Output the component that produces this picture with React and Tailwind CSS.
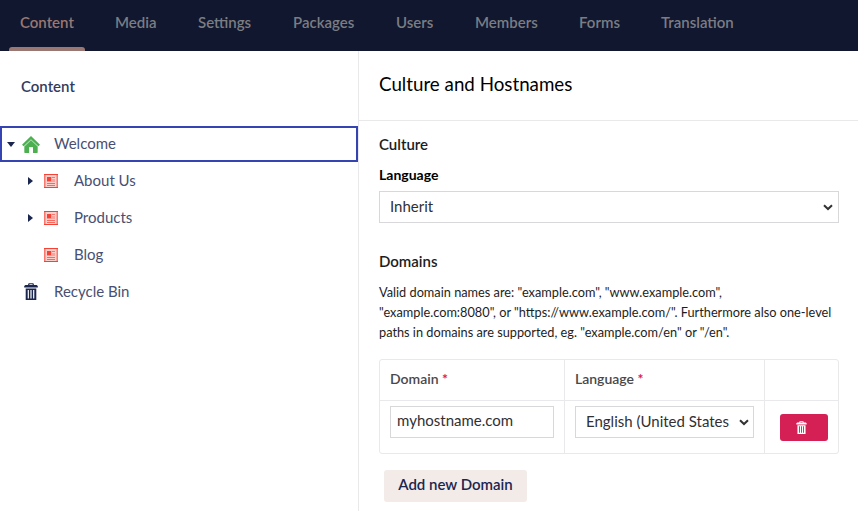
const NAV = [
  { label: 'Content', width: 'w-[95px]', active: true },
  { label: 'Media', width: 'w-[83px]' },
  { label: 'Settings', width: 'w-[95px]' },
  { label: 'Packages', width: 'w-[103px]' },
  { label: 'Users', width: 'w-[79px]' },
  { label: 'Members', width: 'w-[104px]' },
  { label: 'Forms', width: 'w-[82px]' },
  { label: 'Translation', width: 'w-[95px]' },
];

function TrashIcon({ className }) {
  return (
    <svg viewBox="0 0 14 17" className={className} fill="currentColor">
      <path d="M4 2 L4.6 0.3 H9.4 L10 2 H12.6 L13.8 3 V4.6 H0.2 V3 L1.4 2 Z M5.4 1.3 V2 H8.6 V1.3 Z" fillRule="evenodd" />
      <path fillRule="evenodd" d="M1.7 5.6 H12.3 V17 H1.7 Z M3.7 7 V15.4 H4.9 V7 Z M6.4 7 V15.4 H7.6 V7 Z M9.1 7 V15.4 H10.3 V7 Z" />
    </svg>
  );
}

function HomeIcon() {
  return (
    <svg viewBox="0 0 18 17" className="h-[17px] w-[18px] shrink-0 text-[#4caf50]" fill="currentColor">
      <path d="M9 2.5 L16 10 V16.6 H2 V10 Z" opacity="0.45" />
      <path d="M9 0 L18 8.8 L16.4 10.3 L9 3.2 L1.6 10.3 L0 8.8 Z" />
      <path d="M9 4.4 L15.4 10.5 V17 H11 V11.2 H7.2 V17 H2.6 V10.5 Z" />
      <path d="M7.2 11.2 H11 V17 H7.2 Z" fill="#fff" />
    </svg>
  );
}

function NewsIcon() {
  return (
    <svg viewBox="0 0 14 14" className="h-[14px] w-[14px] shrink-0" shapeRendering="crispEdges">
      <rect width="14" height="14" fill="#f44336" />
      <rect x="1" y="1" width="12" height="12" fill="#fccfcb" />
      <rect x="0" y="1" width="1" height="12" fill="#f8786f" />
      <rect x="1" y="1" width="1" height="12" fill="#faa39d" />
      <rect x="12" y="1" width="1" height="12" fill="#faa39d" />
      <rect x="13" y="1" width="1" height="12" fill="#f8786f" />
      <rect x="3" y="3" width="4" height="4" fill="#f44336" />
      <rect x="7" y="3" width="1" height="5" fill="#faa39d" />
      <rect x="3" y="7" width="4" height="1" fill="#f99088" />
      <rect x="8" y="3" width="3" height="1" fill="#f8786f" />
      <rect x="8" y="5" width="3" height="3" fill="#faa39d" />
      <rect x="3" y="9" width="8" height="1" fill="#f66a60" />
      <rect x="3" y="11" width="8" height="1" fill="#f66a60" />
    </svg>
  );
}

function Chevron() {
  return (
    <svg viewBox="0 0 10 7" className="h-[7px] w-[10px] shrink-0" fill="none" stroke="#333" strokeWidth="2">
      <path d="M1 1.2 L5 5 L9 1.2" />
    </svg>
  );
}

function CaretRight() {
  return (
    <svg viewBox="0 0 5 8" className="h-2 w-[5px] shrink-0" fill="#1b264f">
      <path d="M0 0 L5 4 L0 8 Z" />
    </svg>
  );
}

function TreeItem({ label, caret }) {
  return (
    <li className="flex h-[37px] items-center pl-7">
      <span className="flex w-4">{caret && <CaretRight />}</span>
      <NewsIcon />
      <span className="ml-4 pb-0.5">{label}</span>
    </li>
  );
}

function Header({ children }) {
  return (
    <span>
      {children} <span className="font-bold text-[#d42054]">*</span>
    </span>
  );
}

export default function App() {
  return (
    <div className="flex h-[511px] w-[858px] flex-col overflow-hidden bg-white font-['Lato',sans-serif] text-[15px] leading-5 text-black">
      <nav className="flex h-[51px] shrink-0 bg-[#11172e] pl-5 font-semibold text-[#7b7d84]">
        {NAV.map((item) => (
          <div key={item.label} className={`${item.width} flex shrink-0 flex-col justify-between pt-3`}>
            <span className={item.active ? 'text-[#997873]' : ''}>{item.label}</span>
            {item.active && <span className="-ml-[11px] h-1 w-[76px] rounded-t-[3px] bg-[#997873]" />}
          </div>
        ))}
      </nav>
      <div className="flex min-h-0 flex-1">
        <aside className="w-[359px] shrink-0 border-r border-[#e9e9eb] text-[#484f72]">
          <h2 className="h-[75px] pt-[25px] pl-[21px] font-semibold text-[#313b60]">Content</h2>
          <ul>
            <li className="flex h-9 items-center border-2 border-[#3544b1] pl-[5px]">
              <svg viewBox="0 0 8 5" className="h-[5px] w-2 shrink-0" fill="#1b264f">
                <path d="M0 0 H8 L4 5 Z" />
              </svg>
              <span className="ml-[7px] flex"><HomeIcon /></span>
              <span className="ml-3.5 pb-0.5">Welcome</span>
            </li>
            <TreeItem label="About Us" caret />
            <TreeItem label="Products" caret />
            <TreeItem label="Blog" />
            <li className="flex h-[37px] items-center pl-6">
              <TrashIcon className="h-[17px] w-[14px] shrink-0 text-[#1b264f]" />
              <span className="ml-4 pb-0.5">Recycle Bin</span>
            </li>
          </ul>
        </aside>
        <main className="flex-1">
          <h1 className="h-[70px] border-b border-[#e9e9eb] pt-[21px] pl-5 text-[18.75px] leading-6">Culture and Hostnames</h1>
          <div className="flex flex-col items-start pt-[13px] pl-5">
            <h2 className="font-semibold text-[#1d1d1d]">Culture</h2>
            <label className="mt-3 text-[14px] leading-[18px] font-bold">Language</label>
            <div className="mt-[7px] flex h-8 w-[460px] items-center justify-between border border-[#d8d7d9] pr-[5px] pl-2.5 text-[#303033]">
              <span className="pb-0.5">Inherit</span>
              <Chevron />
            </div>
            <h2 className="mt-7 font-semibold text-[#1d1d1d]">Domains</h2>
            <p className="mt-[11px] text-[12.75px] whitespace-nowrap text-[#1d1d1d]">
              Valid domain names are: "example.com", "www.example.com",<br />
              "example.com:8080", or "https://www.example.com/". Furthermore also one-level<br />
              paths in domains are supported, eg. "example.com/en" or "/en".
            </p>
            <div className="mt-[17px] grid h-[95px] w-[460px] grid-cols-[185px_200px_73px] grid-rows-[41px_52px] rounded-[3px] border border-[#e9e9eb]">
              <div className="border-r border-b border-[#e9e9eb] pt-[9px] pl-2.5 text-[14px] font-semibold text-[#48484b]"><Header>Domain</Header></div>
              <div className="border-r border-b border-[#e9e9eb] pt-[9px] pl-2.5 text-[14px] font-semibold text-[#48484b]"><Header>Language</Header></div>
              <div className="border-b border-[#e9e9eb]" />
              <div className="border-r border-[#e9e9eb] pt-[5px] pl-2.5">
                <div className="flex h-8 w-[164px] items-center border border-[#d8d7d9] pb-1 pl-1.5 text-[#303033]">myhostname.com</div>
              </div>
              <div className="border-r border-[#e9e9eb] pt-[5px] pl-2.5">
                <div className="flex h-8 w-[179px] items-center justify-between border border-[#d8d7d9] pr-1 pl-2.5 text-[#303033]">
                  <span className="w-[144px] overflow-hidden pb-0.5 whitespace-nowrap">English (United States</span>
                  <Chevron />
                </div>
              </div>
              <div className="pt-[13px] pl-[15px]">
                <button className="flex h-[27px] w-12 items-center rounded-[3px] bg-[#d42054] pl-4 text-white">
                  <TrashIcon className="h-[13px] w-[11px]" />
                </button>
              </div>
            </div>
            <button className="mt-4 ml-[5px] h-8 w-[143px] rounded-[3px] bg-[#f3ebe8] pb-1 font-semibold text-[#1b264f]">Add new Domain</button>
          </div>
        </main>
      </div>
    </div>
  );
}
